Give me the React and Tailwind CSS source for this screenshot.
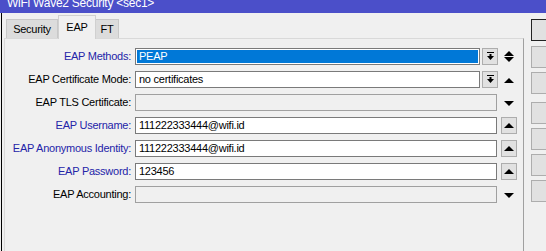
const blue = 'text-[#2424a8]'

function Up() {
  return (
    <svg width="10" height="5" viewBox="0 0 10 5" className="block">
      <path d="M0 5L5 0L10 5Z" fill="#000" />
    </svg>
  )
}

function Down() {
  return (
    <svg width="10" height="5" viewBox="0 0 10 5" className="block">
      <path d="M0 0L10 0L5 5Z" fill="#000" />
    </svg>
  )
}

function DropBtn() {
  return (
    <div className="ml-[2px] w-[16px] h-[17px] bg-[#e1e1e1] border border-[#adadad] flex items-center justify-center">
      <svg width="9" height="9" viewBox="0 0 9 9" className="block">
        <rect x="1" y="0" width="7" height="1" fill="#000" />
        <rect x="3.5" y="2" width="2" height="2" fill="#000" />
        <path d="M1 4H8L4.5 8Z" fill="#000" />
      </svg>
    </div>
  )
}

function Row({ label, isBlue, children }) {
  return (
    <div className="flex items-center h-[17px]">
      <div className={`w-[126px] text-right whitespace-nowrap ${isBlue ? blue : 'text-black'}`}>{label}</div>
      <div className="ml-[4px] flex items-center">{children}</div>
    </div>
  )
}

export default function App() {
  return (
    <div className="w-[546px] h-[251px] overflow-hidden bg-[#f0f0f0] font-['Liberation_Sans',Arial,sans-serif] text-[11px] tracking-[-0.25px] text-black">
      {/* title bar */}
      <div className="h-[13px] bg-[#4b4fc9] overflow-hidden pl-[7px] text-white text-[12px] leading-[13px]">
        <div className="-mt-[3px] whitespace-nowrap">WiFi Wave2 Security &lt;sec1&gt;</div>
      </div>

      <div className="flex h-[238px] ml-[1px] border-l border-black">
        {/* main */}
        <div className="w-[525px] pt-[2px] pl-[2px]">
          <div className="flex items-end h-[23px] pl-[2px]">
            <div className="w-[52px] h-[19px] bg-[#dcdcdc] border border-b-0 border-[#c8c8c8] flex items-center justify-center pt-[1px]">
              Security
            </div>
            <div className="w-[38px] h-[24px] -mb-[1px] bg-[#f0f0f0] border border-b-0 border-[#d0d0d0] flex items-center justify-center pb-[1px] relative">
              EAP
            </div>
            <div className="w-[23px] h-[19px] bg-[#dcdcdc] border border-b-0 border-l-0 border-[#c8c8c8] flex items-center justify-center pt-[1px]">
              FT
            </div>
          </div>

          <div className="w-[520px] h-[220px] border-t border-l border-[#d9d9d9] border-r border-r-[#a0a0a0] pt-[9px] flex flex-col gap-[6px]">
            <Row label="EAP Methods:" isBlue>
              <div className="w-[345px] h-[17px] border border-[#7a7a7a] bg-white p-[1px]">
                <div className="h-full bg-[#0078d7] text-white pl-[2px] leading-[13px]">PEAP</div>
              </div>
              <DropBtn />
              <div className="ml-[3px] w-[16px] flex flex-col items-center gap-[1px]">
                <Up />
                <Down />
              </div>
            </Row>

            <Row label="EAP Certificate Mode:">
              <div className="w-[345px] h-[17px] border border-[#7a7a7a] bg-white pl-[3px] leading-[15px]">no certificates</div>
              <DropBtn />
              <div className="ml-[3px] w-[16px] flex justify-center pt-[1px]">
                <Up />
              </div>
            </Row>

            <Row label="EAP TLS Certificate:">
              <div className="w-[362px] h-[17px] border border-[#a0a0a0] bg-[#f0f0f0]" />
              <div className="ml-[4px] w-[16px] flex justify-center pt-[1px]">
                <Down />
              </div>
            </Row>

            {['111222333444@wifi.id', '111222333444@wifi.id', '123456'].map((v, i) => (
              <Row
                key={i}
                label={['EAP Username:', 'EAP Anonymous Identity:', 'EAP Password:'][i]}
                isBlue
              >
                <div className="w-[362px] h-[17px] border border-[#7a7a7a] bg-white pl-[3px] leading-[15px]">{v}</div>
                <div className="ml-[4px] w-[16px] h-[17px] bg-[#e1e1e1] border border-[#adadad] flex items-center justify-center">
                  <Up />
                </div>
              </Row>
            ))}

            <Row label="EAP Accounting:">
              <div className="w-[362px] h-[17px] border border-[#a0a0a0] bg-[#f0f0f0]" />
              <div className="ml-[4px] w-[16px] flex justify-center pt-[1px]">
                <Down />
              </div>
            </Row>
          </div>
        </div>

        {/* side buttons */}
        <div className="ml-[7px] pt-[6px] flex flex-col">
          <div className="w-[80px] h-[22px] bg-[#e1e1e1] border border-[#222]" />
          <div className="mt-[5px] w-[80px] h-[22px] bg-[#e1e1e1] border border-[#adadad]" />
          <div className="mt-[4px] w-[80px] h-[22px] bg-[#e1e1e1] border border-[#adadad]" />
          <div className="mt-[8px] w-[80px] h-[22px] bg-[#e1e1e1] border border-[#adadad]" />
          <div className="mt-[4px] w-[80px] h-[22px] bg-[#e1e1e1] border border-[#adadad]" />
          <div className="mt-[4px] w-[80px] h-[22px] bg-[#e1e1e1] border border-[#adadad]" />
          <div className="mt-[4px] w-[80px] h-[22px] bg-[#e1e1e1] border border-[#adadad]" />
        </div>
      </div>
    </div>
  )
}
